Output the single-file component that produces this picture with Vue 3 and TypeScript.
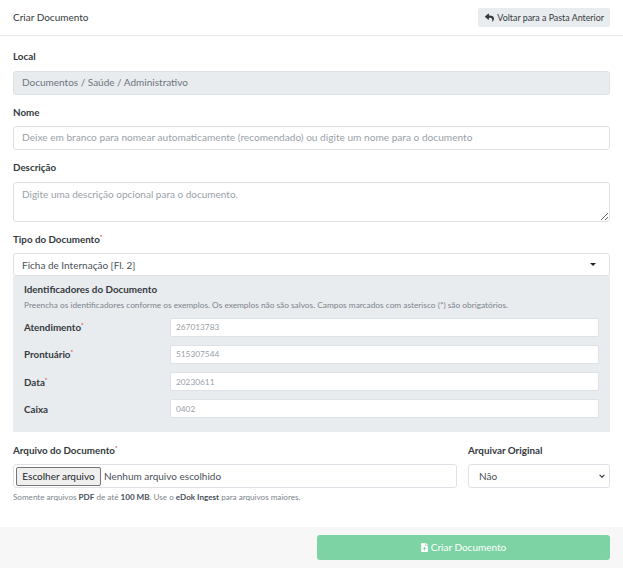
<script setup lang="ts">
import { ref } from "vue"

const identificadores = ref([
  { label: "Atendimento", exemplo: "267013783", obrigatorio: true },
  { label: "Prontuário", exemplo: "515307544", obrigatorio: true },
  { label: "Data", exemplo: "20230611", obrigatorio: true },
  { label: "Caixa", exemplo: "0402", obrigatorio: false },
])
</script>

<template>
  <div class="card">
    <header class="card-header">
      <span class="title">Criar Documento</span>
      <button class="btn-back" type="button">
        <svg class="icon-reply" viewBox="0 0 512 512"><path fill="currentColor" d="M8.3 189.8 184.3 37.8C199.7 24.5 224 35.3 224 56v80.1c160.6 1.8 288 34 288 186.3 0 61.5-39.6 122.4-83.4 154.2-13.7 9.9-33.1-2.5-28.1-18.6 45.4-145.2-21.5-183.7-176.5-185.9V360c0 20.7-24.3 31.5-39.7 18.2l-176-152c-11.1-9.6-11.1-26.8 0-36.4z"/></svg>
        Voltar para a Pasta Anterior
      </button>
    </header>

    <div class="card-body">
      <div class="field">
        <label>Local</label>
        <input class="control raised" type="text" value="Documentos / Saúde / Administrativo" disabled />
      </div>

      <div class="field">
        <label>Nome</label>
        <input class="control raised nome" type="text" placeholder="Deixe em branco para nomear automaticamente (recomendado) ou digite um nome para o documento" />
      </div>

      <div class="field">
        <label>Descrição</label>
        <textarea class="control area" placeholder="Digite uma descrição opcional para o documento."></textarea>
      </div>

      <div class="field tipo">
        <label>Tipo do Documento<sup>*</sup></label>
        <div class="control fake-select">
          <span>Ficha de Internação [Fl. 2]</span>
          <i class="caret"></i>
        </div>
      </div>

      <section class="panel">
        <h6>Identificadores do Documento</h6>
        <p>Preencha os identificadores conforme os exemplos. Os exemplos não são salvos. Campos marcados com asterisco (*) são obrigatórios.</p>
        <div class="id-row" v-for="item in identificadores" :key="item.label">
          <label>{{ item.label }}<sup v-if="item.obrigatorio">*</sup></label>
          <input class="id-input" type="text" :placeholder="item.exemplo" />
        </div>
      </section>

      <div class="file-row">
        <div class="file-col">
          <label>Arquivo do Documento<sup>*</sup></label>
          <div class="control file-box">
            <span class="file-btn">Escolher arquivo</span>
            <span>Nenhum arquivo escolhido</span>
          </div>
          <small>Somente arquivos <b>PDF</b> de até <b>100 MB</b>. Use o <b>eDok Ingest</b> para arquivos maiores.</small>
        </div>
        <div class="orig-col">
          <label>Arquivar Original</label>
          <div class="orig-wrap">
            <select class="control orig-select">
              <option>Não</option>
              <option>Sim</option>
            </select>
            <svg class="chevron" viewBox="0 0 10 6"><path d="M1 1l4 4 4-4" fill="none" stroke="#343a40" stroke-width="1.800"/></svg>
          </div>
        </div>
      </div>
    </div>

    <footer class="card-footer">
      <button class="btn-create" type="button">
        <svg class="icon-file" viewBox="0 0 384 512"><path fill="currentColor" d="M224 136V0H24C10.700 0 0 10.700 0 24v464c0 13.300 10.700 24 24 24h336c13.300 0 24-10.700 24-24V160H248c-13.200 0-24-10.800-24-24zm64 184v16c0 6.600-5.400 12-12 12h-56v56c0 6.600-5.400 12-12 12h-32c-6.600 0-12-5.400-12-12v-56h-56c-6.600 0-12-5.400-12-12v-32c0-6.600 5.400-12 12-12h56v-56c0-6.600 5.400-12 12-12h32c6.600 0 12 5.400 12 12v56h56c6.600 0 12 5.400 12 12zM377 105 279.100 7c-4.500-4.500-10.600-7-17-7H256v128h128v-6.100c0-6.300-2.500-12.400-7-16.900z"/></svg>
        Criar Documento
      </button>
    </footer>
  </div>
</template>

<style>
html, body {
  margin: 0;
  background: #fff;
}
</style>

<style scoped>
.card {
  width: 623px;
  height: 568px;
  display: flex;
  flex-direction: column;
  box-sizing: border-box;
  font-family: Lato, sans-serif;
  font-size: 10px;
  color: #495057;
  overflow: hidden;
}

.card-header {
  height: 36px;
  box-sizing: border-box;
  padding: 0 13px;
  display: flex;
  align-items: center;
  justify-content: space-between;
  border-bottom: 1px solid #e6e8ea;
}

.title {
  color: #343a40;
  margin-bottom: 2px;
}

.btn-back {
  height: 19px;
  padding: 0 6px 0 7px;
  border: 0;
  border-radius: 2px;
  background: #e9ecef;
  color: #343a40;
  font: inherit;
  font-size: 8.9px;
  display: flex;
  align-items: center;
  gap: 3px;
}

.icon-reply {
  width: 9px;
  height: 9px;
}

.card-body {
  flex: 1;
  padding: 14px 13px 0;
}

label {
  display: block;
  font-weight: 700;
  font-size: 9.8px;
  color: #343a40;
  line-height: 14px;
}

sup {
  color: #dc3545;
  font-size: 6px;
  line-height: 0;
}

.field {
  margin-bottom: 11px;
}

.field label {
  line-height: 13px;
  margin-bottom: 7.5px;
}

.control {
  display: block;
  width: 100%;
  height: 24px;
  box-sizing: border-box;
  padding: 0 8px;
  border: 1px solid #dee2e6;
  border-radius: 3px;
  background: #fff;
  color: #495057;
  font: inherit;
  outline: none;
}

.raised {
  padding-bottom: 2px;
}

.nome {
  font-size: 10.15px;
}

.control::placeholder,
.id-input::placeholder {
  color: #9aa1a8;
  opacity: 1;
}

.control:disabled {
  background: #e9ecef;
  color: #6c757d;
}

.area {
  height: 40px;
  padding-top: 5px;
  resize: vertical;
}

.fake-select {
  height: 23px;
  display: flex;
  align-items: center;
  justify-content: space-between;
  padding-right: 13px;
}

.caret {
  width: 0;
  height: 0;
  border: 3.5px solid transparent;
  border-top: 3.5px solid #212529;
  border-bottom: 0;
}

.tipo {
  margin-bottom: 0;
}

.panel {
  padding: 5.5px 11px 0;
  height: 156px;
  box-sizing: border-box;
  background: #e9ecef;
}

.panel h6 {
  margin: 0;
  font-size: 9.85px;
  font-weight: 700;
  line-height: 14px;
  color: #343a40;
}

.panel p {
  margin: 3px 0 7px;
  font-size: 8.3px;
  line-height: 12px;
  color: #7c848b;
}

.id-row {
  display: flex;
  align-items: center;
  height: 19px;
  margin-bottom: 8.33px;
}

.id-row label {
  width: 146px;
  flex: none;
}

.id-input {
  flex: 1;
  min-width: 0;
  height: 19px;
  box-sizing: border-box;
  padding: 0 5px;
  border: 1px solid #dee2e6;
  border-radius: 2px;
  font: inherit;
  font-size: 8.3px;
  outline: none;
}

.file-row {
  display: flex;
  gap: 11px;
  margin-top: 11px;
}

.file-col {
  width: 444px;
}

.orig-col {
  flex: 1;
}

.file-row label {
  margin-bottom: 7px;
}

.file-box {
  display: flex;
  align-items: center;
  gap: 3px;
  padding: 0 2px;
}

.file-btn {
  height: 19px;
  width: 85px;
  justify-content: center;
  display: flex;
  align-items: center;
  box-sizing: border-box;
  background: #efefef;
  border: 1px solid #767676;
  border-radius: 2px;
  color: #212529;
}

.orig-wrap {
  position: relative;
}

.orig-select {
  appearance: none;
  padding: 0 10px;
}

.chevron {
  position: absolute;
  right: 5px;
  top: 10px;
  width: 6px;
  height: 4px;
  pointer-events: none;
}

small {
  display: block;
  margin-top: 3px;
  font-size: 8.1px;
  line-height: 12px;
  color: #7c848b;
}

small b {
  font-weight: 700;
  color: #495057;
}

.card-footer {
  height: 41px;
  box-sizing: border-box;
  padding: 8px 13px;
  display: flex;
  justify-content: flex-end;
  background: #f7f7f7;
}

.btn-create {
  width: 293px;
  height: 25px;
  padding: 0 0 1px;
  border: 0;
  border-radius: 3px;
  background: #7dd3a3;
  color: #fff;
  font: inherit;
  display: flex;
  align-items: center;
  justify-content: center;
  gap: 3px;
}

.icon-file {
  width: 7px;
  height: 9px;
}
</style>
